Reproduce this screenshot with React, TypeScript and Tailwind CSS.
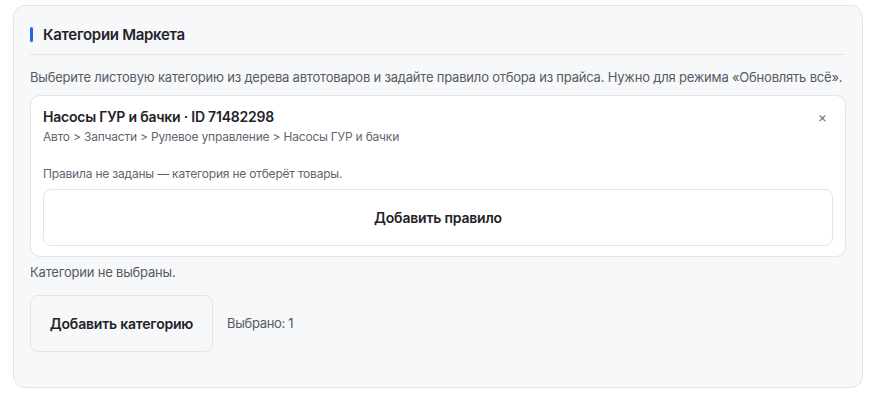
import React from "react";

export default function App() {
  return (
    <div className="w-[875px] h-[395px] bg-white pt-[5px] pl-[13px]" style={{ fontFamily: "Inter, 'Noto Sans', sans-serif" }}>
      <div className="w-[850px] h-[383px] rounded-[12px] border border-[#e3e5e9] bg-[#f7f8fa] px-[16px] pt-[16px]">
        <div className="flex items-center gap-[10px] h-[33px] border-b border-[#e3e5e9] pb-[8px]">
          <span className="w-[3px] h-[15px] rounded-full bg-[#2563eb]" />
          <span className="text-[15px] font-semibold text-[#1f2328] leading-none tracking-[-0.3px]">Категории Маркета</span>
        </div>
        <p className="mt-[13px] text-[13px] leading-[18px] text-[#555b63] tracking-[-0.2px] whitespace-nowrap">
          Выберите листовую категорию из дерева автотоваров и задайте правило отбора из прайса. Нужно для режима «Обновлять всё».
        </p>
        <div className="mt-[9px] rounded-[10px] border border-[#e3e5e9] bg-white px-[12px] pt-[11px] pb-[10px]">
          <div className="flex items-start justify-between">
            <div>
              <div className="text-[14px] font-semibold text-[#1f2328] leading-[20px] tracking-[-0.22px]">Насосы ГУР и бачки · ID 71482298</div>
              <div className="text-[12px] text-[#5f6670] leading-[18px] mt-[1px] tracking-[-0.2px]">Авто &gt; Запчасти &gt; Рулевое управление &gt; Насосы ГУР и бачки</div>
            </div>
            <span className="text-[14px] text-[#6b7280] leading-[20px] mr-[6px] mt-[0px]">×</span>
          </div>
          <div className="mt-[20px] text-[12px] text-[#5f6670] leading-[16px] tracking-[-0.2px]">Правила не заданы — категория не отберёт товары.</div>
          <button className="mt-[7px] w-full h-[57px] rounded-[8px] border border-[#e3e5e9] bg-white text-[14px] font-semibold text-[#1f2328] tracking-[-0.2px]">
            Добавить правило
          </button>
        </div>
        <div className="mt-[6px] text-[13px] text-[#555b63] leading-[18px] tracking-[-0.2px]">Категории не выбраны.</div>
        <div className="mt-[14px] flex items-center gap-[14px]">
          <button className="w-[183px] h-[57px] rounded-[8px] border border-[#e3e5e9] bg-[#f7f8fa] text-[14px] font-semibold text-[#1f2328] tracking-[-0.2px]">
            Добавить категорию
          </button>
          <span className="text-[13px] text-[#555b63] tracking-[-0.3px]">Выбрано: 1</span>
        </div>
      </div>
    </div>
  );
}
